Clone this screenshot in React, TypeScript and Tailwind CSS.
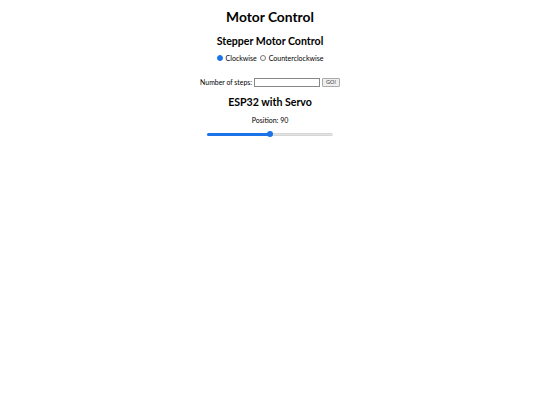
import React, { useState } from "react";

export default function App() {
  const [dir, setDir] = useState<"cw" | "ccw">("cw");
  const [pos] = useState(90);

  return (
    <div className="w-full min-h-screen bg-white text-black font-['Lato',sans-serif] flex flex-col items-center">
      <h1 className="mt-[10px] text-[13.8px] leading-[14px] font-bold">Motor Control</h1>

      <h2 className="mt-[11px] text-[10.6px] leading-[12px] font-bold">Stepper Motor Control</h2>

      <div className="mt-[6px] flex items-center text-[7px] leading-[10px]">
        <span
          onClick={() => setDir("cw")}
          className={`w-[6px] h-[6px] rounded-full mr-[3px] ${
            dir === "cw" ? "bg-[#1a73e8] border border-[#1a73e8]" : "border border-[#777]"
          }`}
        />
        <span className="mr-[3px]">Clockwise</span>
        <span
          onClick={() => setDir("ccw")}
          className={`w-[6px] h-[6px] rounded-full mr-[3px] ${
            dir === "ccw" ? "bg-[#1a73e8] border border-[#1a73e8]" : "border border-[#777]"
          }`}
        />
        <span>Counterclockwise</span>
      </div>

      <div className="mt-[14px] flex items-center text-[6.9px] leading-[10px]">
        <span className="mr-[2px]">Number of steps:</span>
        <div className="w-[66px] h-[9px] border border-[#888] bg-white" />
        <button className="ml-[2px] h-[9px] px-[3px] border border-[#aaa] bg-[#efefef] rounded-[1px] text-[5.5px] leading-[6px] text-[#333]">
          GO!
        </button>
      </div>

      <h2 className="mt-[9px] text-[10.6px] leading-[12px] font-bold">ESP32 with Servo</h2>

      <p className="mt-[7px] text-[7px] leading-[10px]">Position: {pos}</p>

      <div className="mt-[6px] relative w-[126px] h-[6px] flex items-center">
        <div className="w-full h-[3px] rounded-full bg-[#e3e3e3] border border-[#d6d6d6]" />
        <div className="absolute left-0 h-[3px] rounded-full bg-[#1a73e8]" style={{ width: `${(pos / 180) * 100}%` }} />
        <div
          className="absolute w-[6px] h-[6px] rounded-full bg-[#1a73e8] -translate-x-1/2"
          style={{ left: `${(pos / 180) * 100}%` }}
        />
      </div>
    </div>
  );
}
